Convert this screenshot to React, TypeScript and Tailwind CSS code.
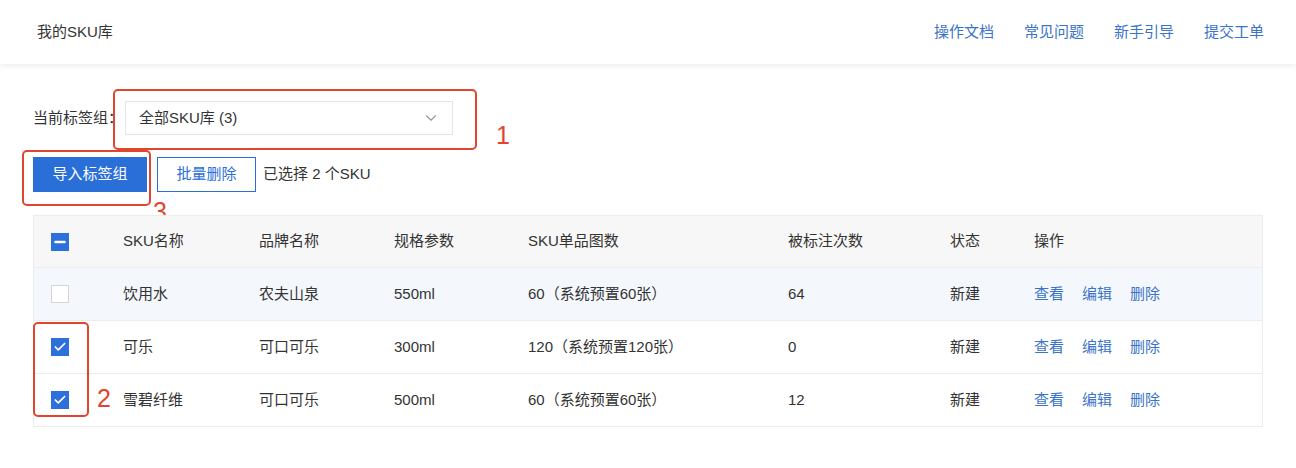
import { Check, ChevronDown, Minus } from 'lucide-react'

const FONT = '"Liberation Sans", "Noto Sans CJK SC", sans-serif'

const rows = [
  { name: '饮用水', brand: '农夫山泉', spec: '550ml', images: '60（系统预置60张）', count: '64', status: '新建', checked: false, hover: true },
  { name: '可乐', brand: '可口可乐', spec: '300ml', images: '120（系统预置120张）', count: '0', status: '新建', checked: true, hover: false },
  { name: '雪碧纤维', brand: '可口可乐', spec: '500ml', images: '60（系统预置60张）', count: '12', status: '新建', checked: true, hover: false },
]

const cols = 'grid grid-cols-[89px_136px_135px_134px_260px_162px_84px_1fr] items-center'

function Box({ state }: { state: 'on' | 'off' | 'some' }) {
  if (state === 'off') {
    return <span className="block h-[18px] w-[18px] border border-[#d4d4d4] bg-white" />
  }
  return (
    <span className="flex h-[18px] w-[18px] items-center justify-center bg-[#2d6fdb] text-white">
      {state === 'on' ? <Check className="h-3.5 w-3.5" strokeWidth={3} /> : <Minus className="h-4 w-4" strokeWidth={3.5} />}
    </span>
  )
}

function Mark({ n, className }: { n: string; className: string }) {
  return <span className={`absolute text-[25px] leading-none text-[#e0452e] ${className}`}>{n}</span>
}

export default function App() {
  return (
    <div className="relative h-[468px] w-[1296px] overflow-hidden bg-white text-[15px] text-[#333]" style={{ fontFamily: FONT }}>
      <header className="flex h-16 items-center justify-between bg-white pl-[37px] pr-[32px] shadow-[0_2px_6px_rgba(0,0,0,0.08)]">
        <div className="text-[15px] text-[#333]">我的SKU库</div>
        <nav className="flex gap-[30px] text-[15px] text-[#3b73c8]">
          <span>操作文档</span>
          <span>常见问题</span>
          <span>新手引导</span>
          <span>提交工单</span>
        </nav>
      </header>

      <main className="px-[33px] pt-[37px]">
        <div className="relative flex items-center">
          <span className="w-[92px]">当前标签组：</span>
          <div className="flex h-[34px] w-[328px] items-center justify-between border border-[#e4e4e4] bg-white pl-[13px] pr-[12px]">
            <span>全部SKU库 (3)</span>
            <ChevronDown className="h-[18px] w-[18px] text-[#999]" strokeWidth={1.5} />
          </div>
          <span className="pointer-events-none absolute left-[80px] top-[-12px] h-[61px] w-[364px] rounded-[5px] border-2 border-[#e0452e]" />
          <Mark n="1" className="left-[463px] top-[22px]" />
        </div>

        <div className="relative mt-[22px] flex items-center">
          <button type="button" className="h-[35px] w-[114px] bg-[#2a6ed8] text-[15px] text-white">导入标签组</button>
          <button type="button" className="ml-[10px] h-[35px] w-[99px] border border-[#2a6ed8] bg-white text-[15px] text-[#2a6ed8]">批量删除</button>
          <span className="ml-[7px]">已选择 2 个SKU</span>
          <span className="pointer-events-none absolute left-[-11px] top-[-7px] h-[56px] w-[129px] rounded-[5px] border-2 border-[#e0452e]" />
          <Mark n="3" className="left-[120px] top-[42px]" />
        </div>

        <div className="relative mt-[23px] w-[1230px] border border-[#ececec]">
          <div className={`${cols} h-[51px] bg-[#f7f7f7]`}>
            <div className="pl-[17px]"><Box state="some" /></div>
            <div>SKU名称</div>
            <div>品牌名称</div>
            <div>规格参数</div>
            <div>SKU单品图数</div>
            <div>被标注次数</div>
            <div>状态</div>
            <div>操作</div>
          </div>
          {rows.map((r) => (
            <div key={r.name} className={`${cols} h-[53px] border-t border-[#ececec] ${r.hover ? 'bg-[#f4f8fd]' : 'bg-white'}`}>
              <div className="pl-[17px]"><Box state={r.checked ? 'on' : 'off'} /></div>
              <div>{r.name}</div>
              <div>{r.brand}</div>
              <div>{r.spec}</div>
              <div>{r.images}</div>
              <div>{r.count}</div>
              <div>{r.status}</div>
              <div className="flex gap-[18px] text-[#3b73c8]">
                <span>查看</span>
                <span>编辑</span>
                <span>删除</span>
              </div>
            </div>
          ))}
          <span className="pointer-events-none absolute left-[-1px] top-[106px] h-[95px] w-[56px] rounded-[5px] border-2 border-[#e0452e]" />
          <Mark n="2" className="left-[63px] top-[170px]" />
        </div>
      </main>
    </div>
  )
}
